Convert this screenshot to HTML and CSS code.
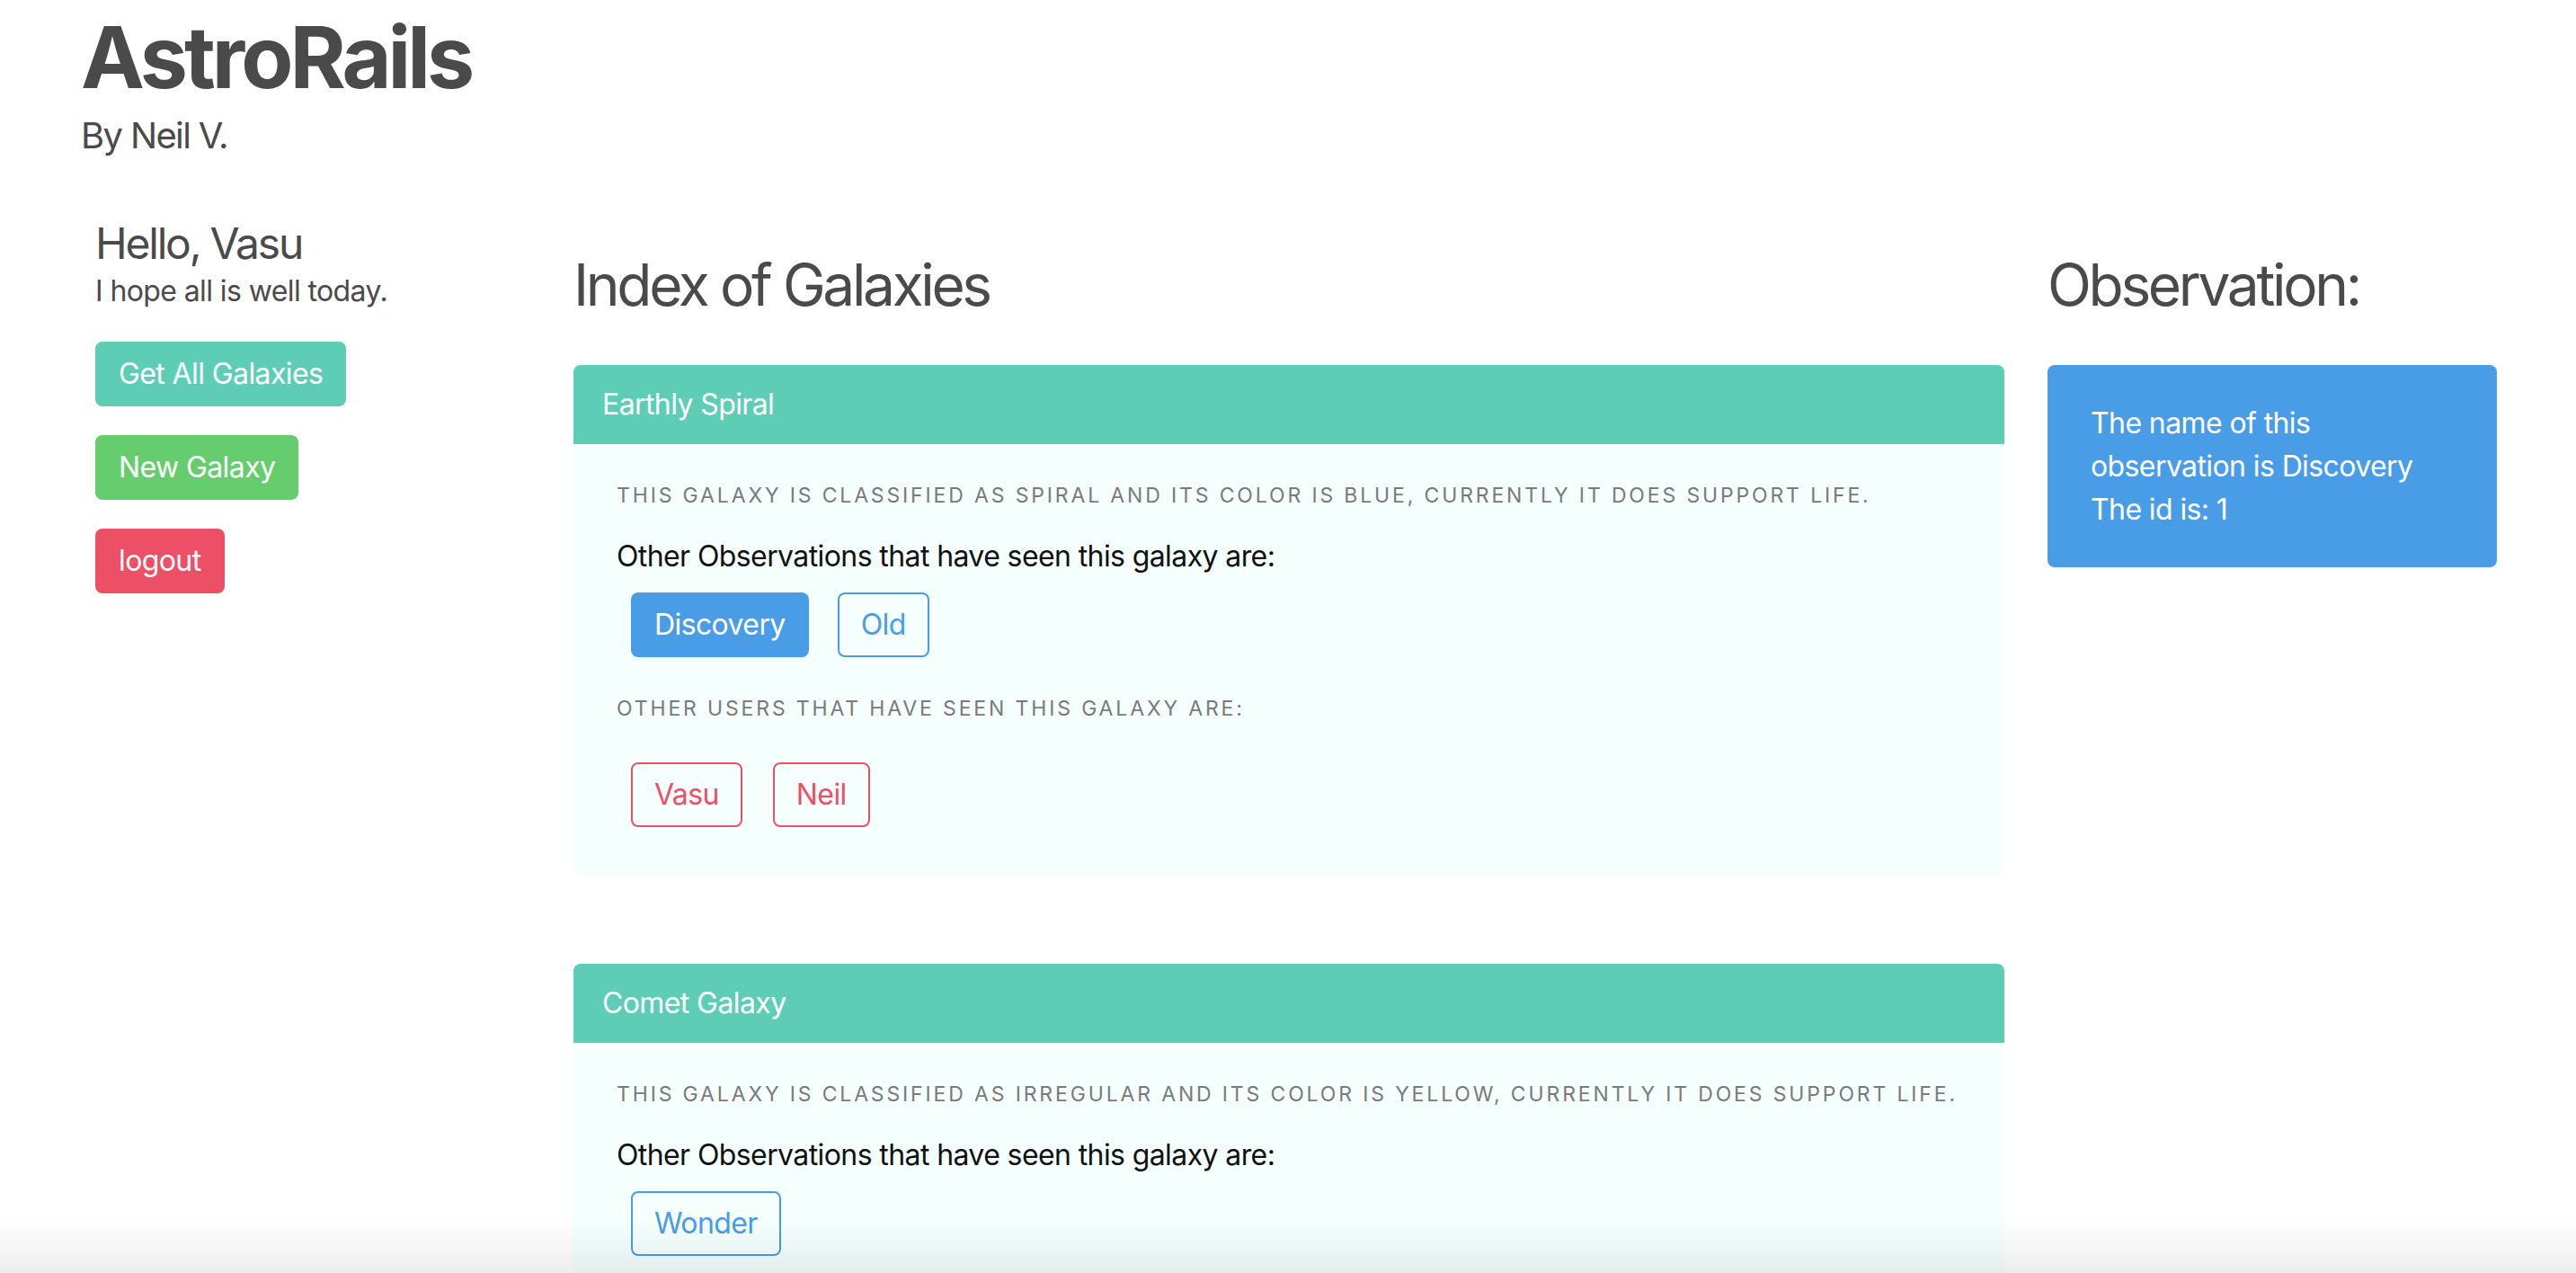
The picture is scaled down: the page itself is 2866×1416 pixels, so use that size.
FILE: index.html
```html
<!DOCTYPE html>
<html lang="en">
<head>
<meta charset="utf-8">
<title>AstroRails</title>
<link rel="stylesheet" href="styles.css">
</head>
<body>
<header class="site-header">
  <h1 class="site-title">AstroRails</h1>
  <p class="site-subtitle">By Neil V.</p>
</header>

<main class="columns">
  <aside class="col col-left">
    <h2 class="hello">Hello, Vasu</h2>
    <p class="hope">I hope all is well today.</p>
    <div class="stack">
      <a class="button is-primary">Get All Galaxies</a>
      <a class="button is-success">New Galaxy</a>
      <a class="button is-danger">logout</a>
    </div>
  </aside>

  <section class="col col-mid">
    <h2 class="col-title">Index of Galaxies</h2>

    <article class="message">
      <div class="message-header">Earthly Spiral</div>
      <div class="message-body">
        <p class="heading">This galaxy is classified as spiral and its color is blue, currently it does support life.</p>
        <p class="others">Other Observations that have seen this galaxy are:</p>
        <div class="btn-row">
          <a class="button is-info">Discovery</a>
          <a class="button is-info is-outlined">Old</a>
        </div>
        <p class="heading users">Other users that have seen this galaxy are:</p>
        <div class="btn-row users-row">
          <a class="button is-danger is-outlined">Vasu</a>
          <a class="button is-danger is-outlined">Neil</a>
        </div>
      </div>
    </article>

    <article class="message">
      <div class="message-header">Comet Galaxy</div>
      <div class="message-body">
        <p class="heading">This galaxy is classified as irregular and its color is yellow, currently it does support life.</p>
        <p class="others">Other Observations that have seen this galaxy are:</p>
        <div class="btn-row">
          <a class="button is-info is-outlined">Wonder</a>
        </div>
      </div>
    </article>
  </section>

  <aside class="col col-right">
    <h2 class="col-title">Observation:</h2>
    <div class="obs-box">
      <p>The name of this observation is Discovery</p>
      <p>The id is: 1</p>
    </div>
  </aside>
</main>

<div class="bottom-fade"></div>
</body>
</html>
```

FILE: styles.css
```css
* { box-sizing: border-box; }

html, body {
  margin: 0;
  padding: 0;
  background: #ffffff;
}

body {
  font-family: Inter, "Noto Sans", "Liberation Sans", sans-serif;
  color: #4a4a4a;
  font-size: 32px;
  line-height: 1.5;
  letter-spacing: -0.6px;
}

p, h1, h2 { margin: 0; }

.site-header {
  padding: 10px 0 0 90px;
}

.site-title {
  font-size: 95px;
  line-height: 108px;
  font-weight: 700;
  color: #4a4a4a;
  letter-spacing: -4px;
}

.site-subtitle {
  margin-top: 8px;
  font-size: 40px;
  line-height: 50px;
  color: #4a4a4a;
  letter-spacing: -1.65px;
}

.columns {
  display: flex;
  align-items: flex-start;
  margin-top: 68px;
  padding-left: 82px;
}

.col { padding: 0 24px; }
.col-left { width: 532px; }
.col-mid { width: 1640px; }
.col-right { width: 548px; }

.hello {
  font-size: 48px;
  line-height: 54px;
  font-weight: 400;
  color: #4a4a4a;
  letter-spacing: -2.2px;
}

.hope {
  margin-top: 2px;
  font-size: 32px;
  line-height: 48px;
}

.stack {
  margin-top: 32px;
  display: flex;
  flex-direction: column;
  align-items: flex-start;
  gap: 32px;
}

.button {
  display: inline-block;
  font-size: 32px;
  line-height: 48px;
  padding: 10px 24px;
  border: 2px solid transparent;
  border-radius: 8px;
  color: #ffffff;
  text-decoration: none;
  white-space: nowrap;
}

.button.is-primary { background: #5dceb5; }
.button.is-success { background: #66cd6e; }
.button.is-danger  { background: #ed4f67; }
.button.is-info    { background: #499ce6; }

.button.is-outlined { background: transparent; }
.button.is-info.is-outlined { border-color: #499ce6; color: #499ce6; }
.button.is-danger.is-outlined { border-color: #ed4f67; color: #ed4f67; }

.col-title {
  margin-top: 37px;
  font-size: 64px;
  line-height: 72px;
  font-weight: 400;
  color: #4a4a4a;
  letter-spacing: -3.35px;
}

.message {
  margin-top: 53px;
  border-radius: 8px;
  background: #f5fffd;
}

.message + .message { margin-top: 98px; }

.message-header {
  background: #5dceb5;
  color: #ffffff;
  font-size: 32px;
  line-height: 40px;
  padding: 24px 32px;
  border-radius: 8px 8px 0 0;
}

.message-body {
  padding: 41px 48px 54px;
  border-radius: 0 0 8px 8px;
}

.heading {
  font-size: 23px;
  line-height: 33px;
  letter-spacing: 2.85px;
  text-transform: uppercase;
  color: #7a7a7a;
}

.others {
  margin-top: 27px;
  font-size: 32px;
  line-height: 48px;
  color: #111111;
}

.btn-row {
  margin-top: 16px;
  display: flex;
  gap: 32px;
  padding-left: 16px;
}

.heading.users { margin-top: 41px; }
.users-row { margin-top: 43px; gap: 34px; }

.obs-box {
  margin-top: 53px;
  width: 500px;
  background: #499ce6;
  color: #ffffff;
  border-radius: 8px;
  padding: 41px 48px 40px;
  font-size: 32px;
  line-height: 48px;
}

.bottom-fade {
  position: fixed;
  left: 0;
  right: 0;
  bottom: 0;
  height: 60px;
  background: linear-gradient(to bottom, rgba(0,0,0,0), rgba(0,0,0,0.07));
  pointer-events: none;
}
```
